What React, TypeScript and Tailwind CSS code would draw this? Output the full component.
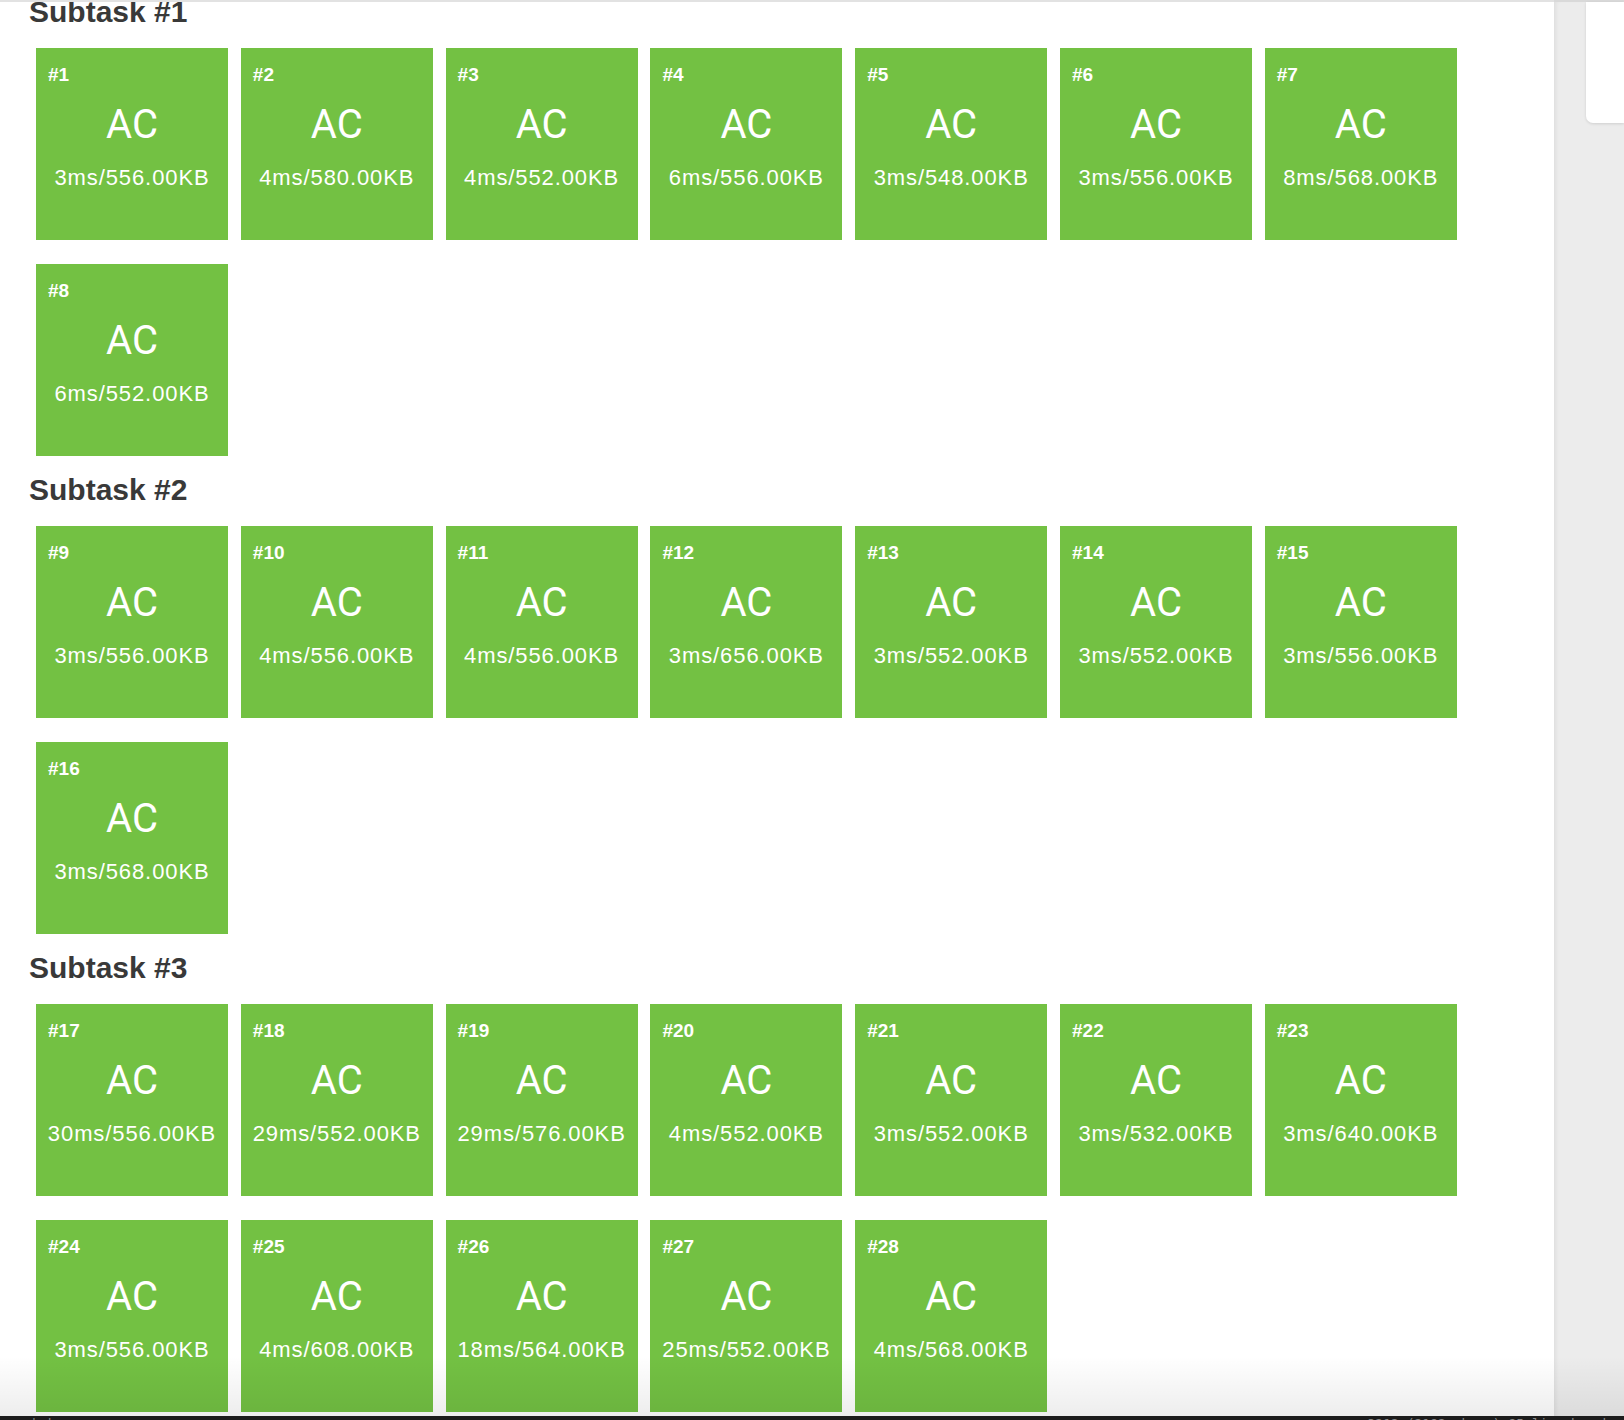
import React from "react";

type TestCase = {
  id: number;
  time: string;
  memory: string;
};

type Subtask = {
  name: string;
  cases: TestCase[];
};

const subtasks: Subtask[] = [
  {
    name: "Subtask #1",
    cases: [
      { id: 1, time: "3ms", memory: "556.00KB" },
      { id: 2, time: "4ms", memory: "580.00KB" },
      { id: 3, time: "4ms", memory: "552.00KB" },
      { id: 4, time: "6ms", memory: "556.00KB" },
      { id: 5, time: "3ms", memory: "548.00KB" },
      { id: 6, time: "3ms", memory: "556.00KB" },
      { id: 7, time: "8ms", memory: "568.00KB" },
      { id: 8, time: "6ms", memory: "552.00KB" },
    ],
  },
  {
    name: "Subtask #2",
    cases: [
      { id: 9, time: "3ms", memory: "556.00KB" },
      { id: 10, time: "4ms", memory: "556.00KB" },
      { id: 11, time: "4ms", memory: "556.00KB" },
      { id: 12, time: "3ms", memory: "656.00KB" },
      { id: 13, time: "3ms", memory: "552.00KB" },
      { id: 14, time: "3ms", memory: "552.00KB" },
      { id: 15, time: "3ms", memory: "556.00KB" },
      { id: 16, time: "3ms", memory: "568.00KB" },
    ],
  },
  {
    name: "Subtask #3",
    cases: [
      { id: 17, time: "30ms", memory: "556.00KB" },
      { id: 18, time: "29ms", memory: "552.00KB" },
      { id: 19, time: "29ms", memory: "576.00KB" },
      { id: 20, time: "4ms", memory: "552.00KB" },
      { id: 21, time: "3ms", memory: "552.00KB" },
      { id: 22, time: "3ms", memory: "532.00KB" },
      { id: 23, time: "3ms", memory: "640.00KB" },
      { id: 24, time: "3ms", memory: "556.00KB" },
      { id: 25, time: "4ms", memory: "608.00KB" },
      { id: 26, time: "18ms", memory: "564.00KB" },
      { id: 27, time: "25ms", memory: "552.00KB" },
      { id: 28, time: "4ms", memory: "568.00KB" },
    ],
  },
];

const CaseCard = ({ test }: { test: TestCase }) => (
  <div className="w-[192px] h-[192px] bg-[#73c143] text-white flex flex-col">
    <div className="pl-[12px] pt-[18px] h-[36px] text-[19px] leading-[18px] font-bold font-['Liberation_Sans',sans-serif]">
      #{test.id}
    </div>
    <div className="mt-[21px] h-[40px] text-center text-[40px] leading-[40px] font-['Roboto',sans-serif]">
      AC
    </div>
    <div className="mt-[21px] text-center text-[22px] leading-[24px] tracking-[0.9px] whitespace-nowrap font-['Liberation_Sans',sans-serif]">
      {test.time}/{test.memory}
    </div>
  </div>
);

export default function App() {
  return (
    <div className="relative h-[1420px] w-full overflow-hidden flex flex-col bg-white">
      <div className="flex flex-1 min-h-0">
        {/* Results panel */}
        <div className="w-[1554px] shrink-0 overflow-hidden border-t-2 border-[#e2e2e2] bg-white">
          <div className="-mt-[24px] pl-[29px]">
            {subtasks.map((subtask) => (
              <section key={subtask.name}>
                <h3 className="mt-[17px] mb-[20px] h-[33px] text-[30px] leading-[33px] font-bold text-[#393939] font-['Liberation_Sans',sans-serif]">
                  {subtask.name}
                </h3>
                <div className="ml-[7px] flex flex-wrap gap-x-[12.8px] gap-y-6">
                  {subtask.cases.map((test) => (
                    <CaseCard key={test.id} test={test} />
                  ))}
                </div>
              </section>
            ))}
          </div>
        </div>

        {/* Sidebar */}
        <div className="flex-1 bg-[#ececec] border-t-2 border-[#d9d9d9] shadow-[inset_4px_0_4px_-2px_rgba(0,0,0,0.06)] pl-[32px]">
          <div className="h-[121px] bg-white rounded-bl-[7px] shadow-[0_1px_3px_rgba(0,0,0,0.12)]" />
        </div>
      </div>

      {/* Status bar */}
      <div className="h-[4px] shrink-0 overflow-hidden bg-[#1c1c1c] flex text-[13px] leading-[13px] text-[#8a8a8a] font-['DejaVu_Sans_Mono',monospace]">
        <span className="ml-[30px] pt-[1px]">| |</span>
        <span className="ml-auto mr-[6px] pt-[1px]">3212 (2182 chars) 85 line breaks</span>
      </div>

      <div className="pointer-events-none absolute left-0 right-0 bottom-[4px] h-[60px] bg-gradient-to-b from-transparent to-black/[0.07]" />
    </div>
  );
}
